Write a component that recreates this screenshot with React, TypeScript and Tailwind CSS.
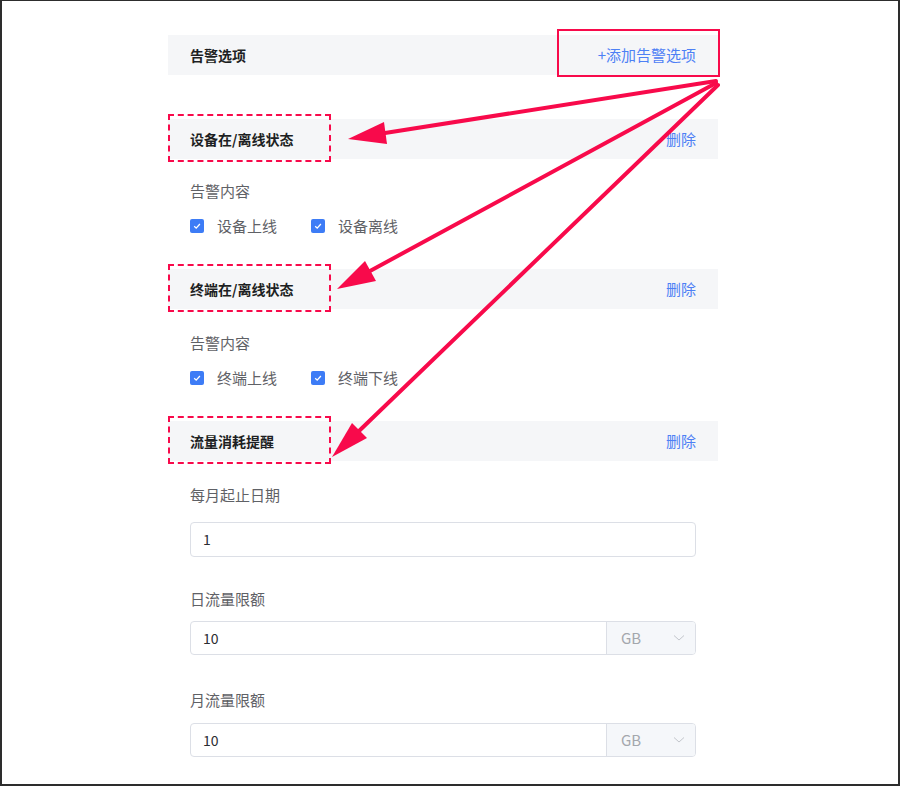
import React from 'react';

const font = { fontFamily: '"Noto Sans CJK SC", "Noto Sans", sans-serif' };

function Check({ label }: { label: string }) {
  return (
    <label className="flex items-center mr-[34px]">
      <span className="w-[14px] h-[14px] rounded-[2px] bg-[#3d7cf6] flex items-center justify-center">
        <svg width="10" height="10" viewBox="0 0 10 10" fill="none">
          <path d="M2.2 5.2 L4.2 7.1 L7.9 3" stroke="white" strokeWidth="1.3" />
        </svg>
      </span>
      <span className="ml-[13px] text-[15px] text-[#5f6166]">{label}</span>
    </label>
  );
}

function SectionHeader({ title, action, addBox }: { title: string; action: string; addBox?: boolean }) {
  return (
    <div className="relative h-[40px] bg-[#f5f6f8] flex items-center justify-between px-[22px]">
      <span className="text-[14px] font-bold text-[#1d1f23]">{title}</span>
      <span className="text-[15px] text-[#4d80f5]">{action}</span>
      {addBox ? (
        <div className="absolute left-[389px] top-[-6px] w-[163px] h-[48px] border-2 border-[#f80a4b]" />
      ) : (
        <div className="absolute left-0 top-[-5px] w-[163px] h-[48px] border-2 border-dashed border-[#f80a4b]" />
      )}
    </div>
  );
}

function UnitInput({ value }: { value: string }) {
  return (
    <div className="flex h-[34px] border border-[#dcdfe6] rounded-[4px] overflow-hidden">
      <div className="flex-1 flex items-center px-[12px] text-[14px] text-[#2b2d31]">{value}</div>
      <div className="w-[89px] flex items-center justify-between pl-[14px] pr-[10px] bg-[#f5f7fa] border-l border-[#dcdfe6]">
        <span className="text-[15px] text-[#a4a7ad]">GB</span>
        <svg width="12" height="8" viewBox="0 0 12 8" fill="none">
          <path d="M1 1.5 L6 6 L11 1.5" stroke="#c3c6cc" strokeWidth="1" />
        </svg>
      </div>
    </div>
  );
}

export default function App() {
  return (
    <div
      className="relative w-[900px] h-[786px] bg-white border-t border-l-2 border-r-2 border-b-2 border-[#2d2d2d] overflow-hidden"
      style={font}
    >
      <div className="ml-[166px] w-[550px] pt-[34px]">
        <SectionHeader title="告警选项" action="+添加告警选项" addBox />

        <div className="mt-[44px]">
          <SectionHeader title="设备在/离线状态" action="删除" />
          <div className="px-[22px]">
            <div className="mt-[22px] h-[20px] leading-[20px] text-[15px] text-[#5f6166]">告警内容</div>
            <div className="mt-[15px] h-[20px] flex">
              <Check label="设备上线" />
              <Check label="设备离线" />
            </div>
          </div>
        </div>

        <div className="mt-[33px]">
          <SectionHeader title="终端在/离线状态" action="删除" />
          <div className="px-[22px]">
            <div className="mt-[24px] h-[20px] leading-[20px] text-[15px] text-[#5f6166]">告警内容</div>
            <div className="mt-[15px] h-[20px] flex">
              <Check label="终端上线" />
              <Check label="终端下线" />
            </div>
          </div>
        </div>

        <div className="mt-[33px]">
          <SectionHeader title="流量消耗提醒" action="删除" />
          <div className="px-[22px]">
            <div className="mt-[24px] h-[20px] leading-[20px] text-[15px] text-[#5f6166]">每月起止日期</div>
            <div className="mt-[17px] h-[35px] flex items-center px-[12px] border border-[#dcdfe6] rounded-[4px] text-[14px] text-[#2b2d31]">
              1
            </div>
            <div className="mt-[32px] h-[20px] leading-[20px] text-[15px] text-[#5f6166]">日流量限额</div>
            <div className="mt-[12px]">
              <UnitInput value="10" />
            </div>
            <div className="mt-[35px] h-[20px] leading-[20px] text-[15px] text-[#5f6166]">月流量限额</div>
            <div className="mt-[13px]">
              <UnitInput value="10" />
            </div>
          </div>
        </div>
      </div>

      {/* annotation arrows */}
      <svg className="absolute left-[-2px] top-[-1px] pointer-events-none" width="900" height="786" viewBox="0 0 900 786">
        <g stroke="#f80a4b" strokeWidth="4" fill="none" strokeLinecap="round">
          <line x1="716" y1="81" x2="385" y2="133" />
          <line x1="716" y1="83" x2="370" y2="271" />
          <line x1="718" y1="85" x2="359" y2="431" />
        </g>
        <g fill="#f80a4b">
          <polygon points="348,139 387,144 384,122" />
          <polygon points="337,289 376,281 365,261" />
          <polygon points="332,457 367,438 352,423" />
        </g>
      </svg>
    </div>
  );
}
